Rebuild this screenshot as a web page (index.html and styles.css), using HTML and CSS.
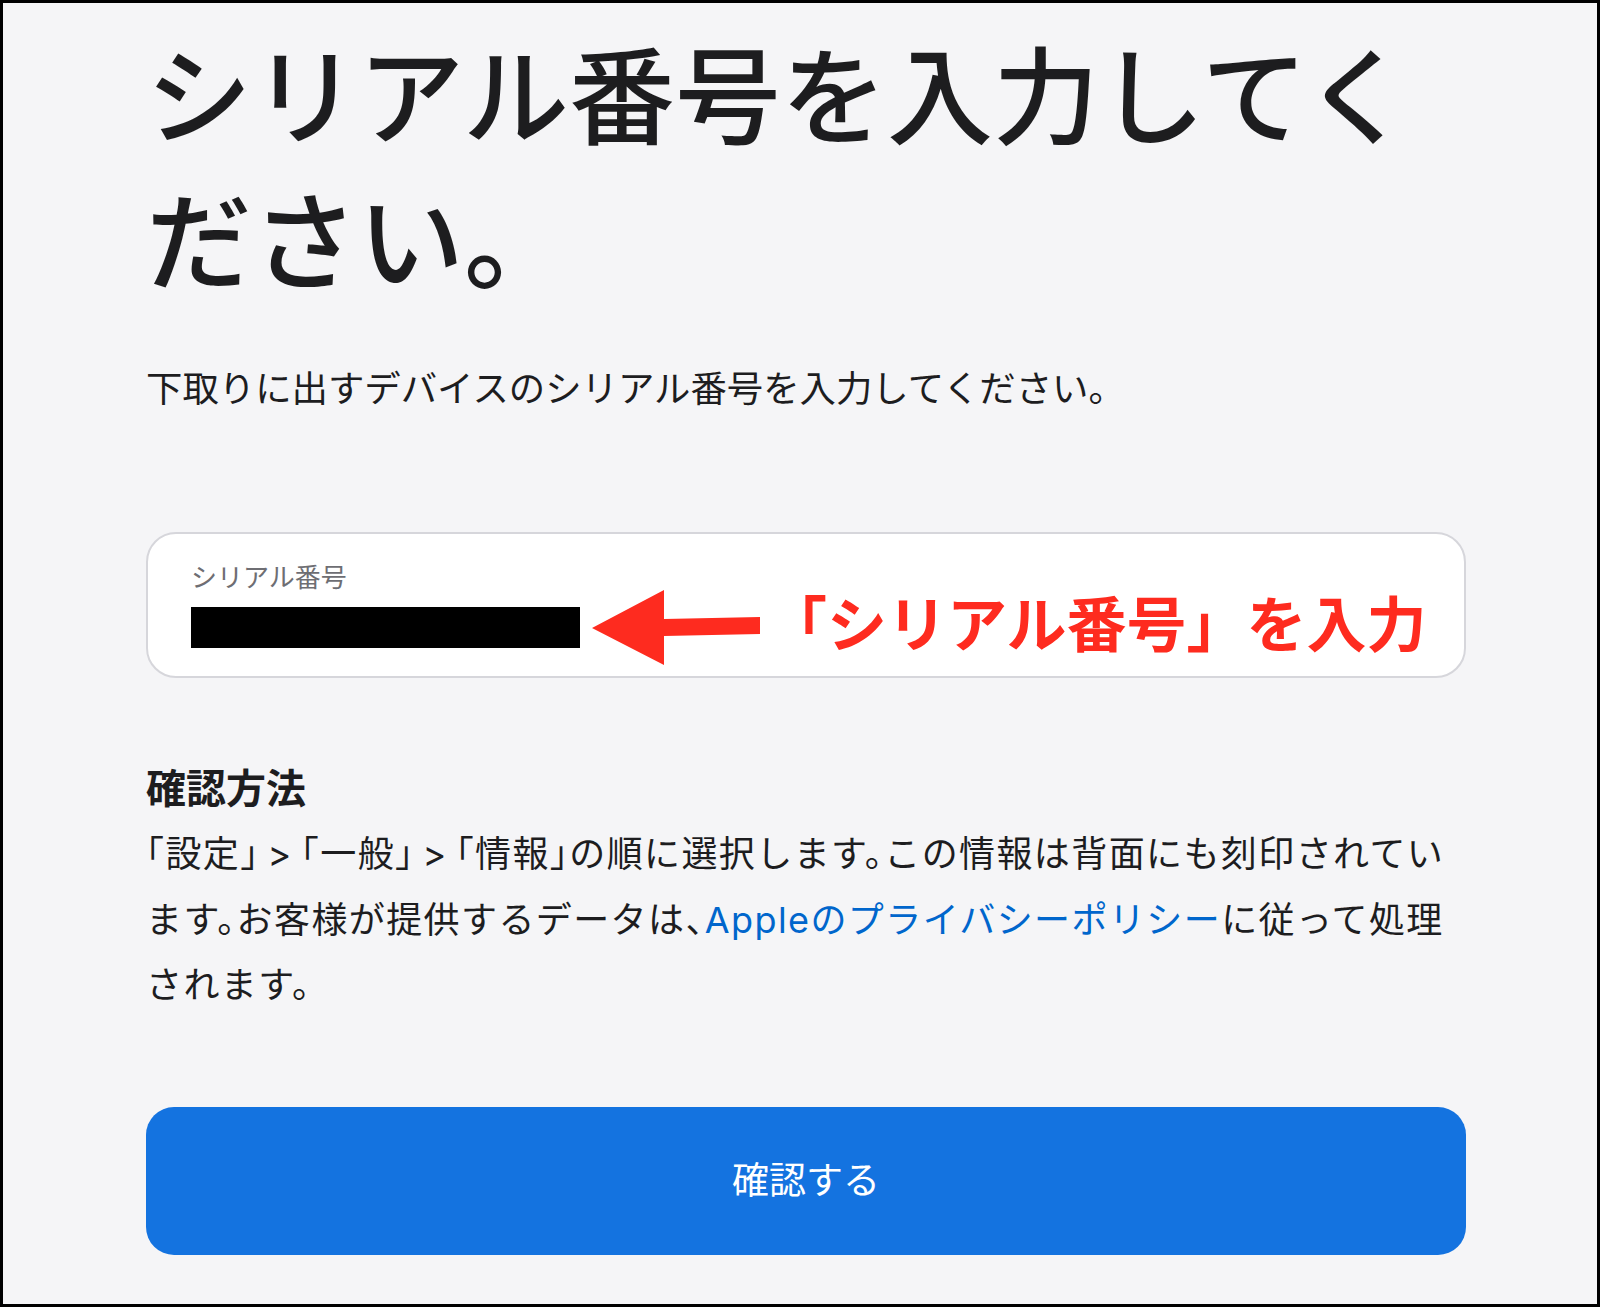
FILE: index.html
```html
<!DOCTYPE html>
<html lang="ja">
<head>
    <meta charset="UTF-8">
    <meta name="viewport" content="width=device-width, initial-scale=1.0">
    <title>シリアル番号を入力してください。</title>
    <link rel="stylesheet" href="styles.css">
</head>
<body>
    <div class="frame">
        <div class="content">
            <h1 class="title">シリアル番号を入力してください。</h1>
            <p class="lead">下取りに出すデバイスのシリアル番号を入力してください。</p>

            <div class="field">
                <label class="field-label" for="serial">シリアル番号</label>
                <div class="field-value" id="serial"><span class="redacted"></span></div>

                <!-- annotation drawn over the screenshot -->
                <div class="callout">
                    <svg class="arrow" width="168" height="75" viewBox="0 0 168 75">
                        <path d="M0 38 L72 0 L72 29 L168 27 L168 44 L72 46 L72 75 Z" fill="#fe2b1f"/>
                    </svg>
                    <span class="callout-text">「シリアル番号」を入力</span>
                </div>
            </div>

            <h3 class="howto-title">確認方法</h3>
            <p class="howto">「設定」<span class="sep">&gt;</span>「一般」<span class="sep">&gt;</span>「情報」の順に選択します。この情報は背面にも刻印されています。お客様が提供するデータは、<a href="#">Appleのプライバシーポリシー</a>に従って処理されます。</p>

            <button type="button" class="confirm">確認する</button>
        </div>
    </div>
</body>
</html>
```

FILE: styles.css
```css
body {
    margin: 0;
    font-family: "Inter", "Noto Sans CJK JP", sans-serif;
    color: #1d1d1f;
}
.frame {
    box-sizing: border-box;
    height: 1307px;
    border: 3px solid #000;
    background-color: #f5f5f7;
    padding: 22px 131px 0 143px;
    overflow: hidden;
}
.content {
    width: 1320px;
}
.title {
    margin: 0;
    font-size: 106px;
    line-height: 145px;
    font-weight: 500;
}
.lead {
    margin: 45px 0 0;
    font-size: 36.4px;
    line-height: 58px;
}
.field {
    position: relative;
    margin-top: 114px;
    padding: 28px 43px 28px;
    background-color: #fff;
    border: 2px solid #d6d6db;
    border-radius: 30px;
}
.field-label {
    display: block;
    font-size: 26px;
    line-height: 32px;
    color: #6e6e73;
}
.field-value {
    margin-top: 13px;
    height: 41px;
}
.redacted {
    display: block;
    width: 389px;
    height: 41px;
    background-color: #000;
}
.callout {
    position: absolute;
    left: 444px;
    top: 56px;
    display: flex;
    align-items: center;
    gap: 7px;
}
.arrow {
    display: block;
}
.callout-text {
    font-size: 60px;
    line-height: 60px;
    font-weight: 700;
    color: #fe2b1f;
    margin-top: -6px;
    white-space: nowrap;
}
.howto-title {
    margin: 78px 0 0;
    font-size: 40px;
    line-height: 66px;
    font-weight: 700;
}
.howto {
    margin: 0;
    font-size: 36px;
    line-height: 65.5px;
    letter-spacing: 1.4px;
    font-feature-settings: "halt";
}
.howto .sep {
    margin: 0 8px;
}
.howto a {
    color: #0066cc;
    text-decoration: none;
}
.confirm {
    display: block;
    width: 100%;
    height: 148px;
    margin-top: 88px;
    padding: 0 0 6px;
    border: none;
    border-radius: 28px;
    background-color: #1473e0;
    color: #fff;
    font-family: inherit;
    font-size: 37px;
    cursor: pointer;
}
```
